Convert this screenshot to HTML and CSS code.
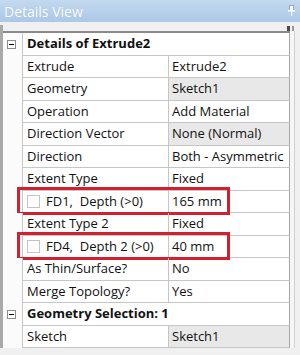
FILE: index.html
```html
<!DOCTYPE html>
<html lang="en">
<head>
    <meta charset="UTF-8">
    <title>Details View</title>
    <link rel="stylesheet" href="styles.css">
</head>
<body>
    <div class="title">
        <span>Details View</span>
        <svg class="pin" width="7" height="11" viewBox="0 0 7 11">
            <rect x="1.5" y="0.5" width="4" height="5" fill="#fff" stroke="#8aa9cc" stroke-width="1"/>
            <rect x="0" y="5" width="7" height="1.5" fill="#fff"/>
            <rect x="3" y="6" width="1.2" height="5" fill="#fff"/>
        </svg>
    </div>

    <div class="panel">
        <span class="grip"></span>
        <div class="grid">
            <!-- Details group -->
            <div class="row">
                <span class="gut"><i class="tog"></i></span>
                <span class="head">Details of Extrude2</span>
            </div>
            <div class="row"><span class="gut"></span><span class="key">Extrude</span><span class="val">Extrude2</span></div>
            <div class="row"><span class="gut"></span><span class="key">Geometry</span><span class="val ro">Sketch1</span></div>
            <div class="row"><span class="gut"></span><span class="key">Operation</span><span class="val">Add Material</span></div>
            <div class="row"><span class="gut"></span><span class="key">Direction Vector</span><span class="val ro">None (Normal)</span></div>
            <div class="row"><span class="gut"></span><span class="key">Direction</span><span class="val">Both - Asymmetric</span></div>
            <div class="row"><span class="gut"></span><span class="key">Extent Type</span><span class="val">Fixed</span></div>
            <div class="row">
                <span class="gut"></span>
                <span class="key"><i class="check"></i>FD1,&nbsp; Depth (&gt;0)</span>
                <span class="val">165 mm</span>
                <div class="mark"></div>
            </div>
            <div class="row"><span class="gut"></span><span class="key">Extent Type 2</span><span class="val">Fixed</span></div>
            <div class="row">
                <span class="gut"></span>
                <span class="key"><i class="check"></i>FD4,&nbsp; Depth 2 (&gt;0)</span>
                <span class="val">40 mm</span>
                <div class="mark"></div>
            </div>
            <div class="row"><span class="gut"></span><span class="key">As Thin/Surface?</span><span class="val">No</span></div>
            <div class="row"><span class="gut"></span><span class="key">Merge Topology?</span><span class="val">Yes</span></div>

            <!-- Geometry selection group -->
            <div class="row">
                <span class="gut"><i class="tog"></i></span>
                <span class="head">Geometry Selection: 1</span>
            </div>
            <div class="row"><span class="gut"></span><span class="key">Sketch</span><span class="val ro">Sketch1</span></div>
        </div>
        <div class="scroll"></div>
    </div>
</body>
</html>
```

FILE: styles.css
```css
body {
    margin: 0;
    background: #f0f0f0;
    font-family: "Open Sans", "Noto Sans", sans-serif;
    font-size: 13px;
    color: #111;
}
.title {
    height: 22px;
    display: flex;
    align-items: center;
    justify-content: space-between;
    padding: 0 5px 0 4px;
    background: linear-gradient(#c4d9ef, #abc8e7);
    color: #fff;
    font-size: 14px;
    text-shadow: 0 0 1px #9ab6d6;
}
.pin {
    margin-top: -2px;
}
.panel {
    display: flex;
    position: relative;
    margin-top: 3px;
    padding-top: 6px;
    border-left: 3px solid #a9a9a9;
}
.grip {
    position: absolute;
    top: 1px;
    right: 8px;
    width: 3px;
    height: 5px;
    background: #4a4a4a;
    border-right: 2px solid #f0f0f0;
    box-shadow: 2px 0 0 #9a9a9a;
}
.grid {
    width: 287px;
    border-top: 2px solid #8a8a8a;
    background: #fff;
}
.row {
    display: grid;
    grid-template-columns: 19px 146px 122px;
    height: 22.5px;
    position: relative;
}
.gut {
    background: #fbfbfb;
    display: flex;
    align-items: center;
    padding-left: 4px;
}
.tog {
    width: 7px;
    height: 7px;
    border: 1px solid #8c8c8c;
    background: #fff;
    position: relative;
}
.tog::after {
    content: "";
    position: absolute;
    left: 1px;
    top: 3px;
    width: 5px;
    height: 1px;
    background: #000;
}
.key, .val, .head {
    border-left: 1px solid #c6c6c6;
    border-bottom: 1px solid #c6c6c6;
    padding-left: 4px;
    line-height: 21.5px;
    white-space: nowrap;
    overflow: hidden;
}
.key {
    display: flex;
    align-items: center;
}
.val {
    padding-left: 3px;
    border-right: 1px solid #a8a8a8;
}
.val.ro {
    background: #e8e8e8;
}
.head {
    grid-column: span 2;
    font-weight: bold;
    border-right: 1px solid #a8a8a8;
}
.check {
    width: 13px;
    height: 13px;
    box-sizing: border-box;
    border: 1px solid #c4c4c4;
    background: #fff;
    margin-right: 6px;
}
.mark {
    position: absolute;
    left: 14px;
    top: -3.5px;
    width: 213px;
    height: 28px;
    box-sizing: border-box;
    border: 3px solid #d22030;
}
.scroll {
    width: 4px;
    border-right: 1px solid #d0d0d0;
    background: #f6f6f6;
}
```
